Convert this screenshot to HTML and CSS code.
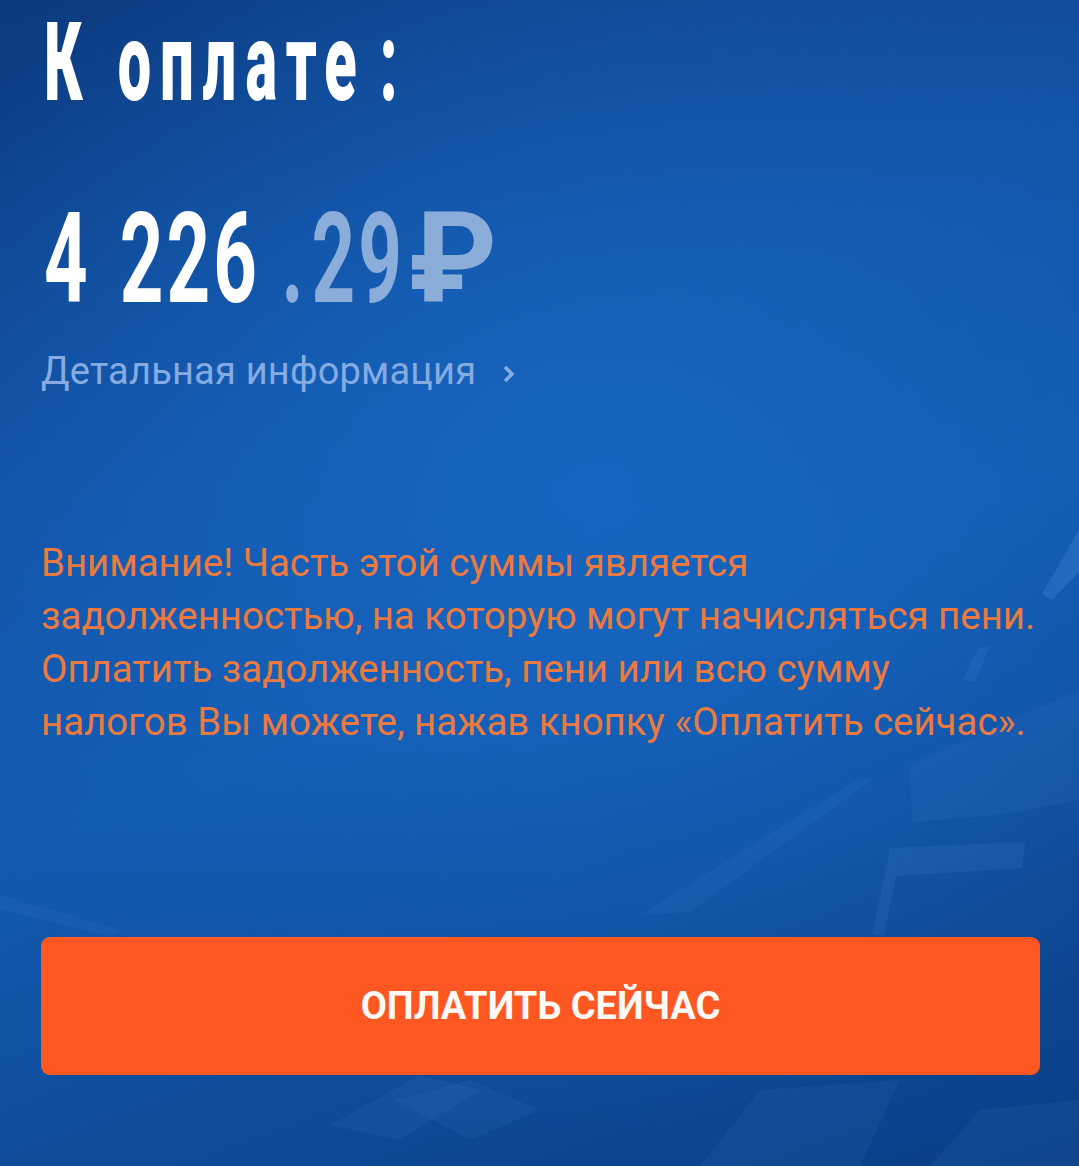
FILE: index.html
```html
<!DOCTYPE html>
<html lang="ru">
<head>
<meta charset="utf-8">
<title>К оплате</title>
<link rel="stylesheet" href="styles.css">
</head>
<body>
<main class="screen">
  <svg class="backdrop" viewBox="0 0 1079 1166" preserveAspectRatio="none" aria-hidden="true">
    <polygon class="glint glint-strong" points="1042,594 1079,530 1079,572 1052,600"/>
    <polygon class="glint" points="963,680 978,648 990,646 975,682"/>
    <polygon class="glint glint-soft" points="910,765 1079,690 1079,800 1000,815 912,822"/>
    <polygon class="glint glint-soft" points="640,915 860,778 872,780 690,912"/>
    <polygon class="glint" points="885,873 890,848 1025,842 1022,868 896,876 884,935 872,935"/>
    <polygon class="glint glint-soft" points="700,1166 760,1090 900,1080 860,1166"/>
    <polygon class="glint glint-soft" points="330,1125 420,1075 480,1090 400,1140"/>
    <polygon class="glint glint-soft" points="395,1100 470,1080 540,1110 470,1140"/>
    <polygon class="glint glint-soft" points="0,895 120,930 110,936 0,910"/>
    <polygon class="glint glint-soft" points="930,1166 980,1110 1079,1100 1079,1166"/>
  </svg>

  <section class="summary">
    <h1 class="title"><span class="narrow">К оплате<span class="colon">:</span></span></h1>
    <p class="amount"><span class="narrow"><span class="whole">4 226</span><span class="fraction"><span class="dot">.</span>29<span class="rub">₽</span></span></span></p>
    <a class="details" href="#">Детальная информация
      <svg class="chevron" viewBox="0 0 14 18" aria-hidden="true"><polyline points="3,2 10,9 3,16"/></svg>
    </a>
  </section>

  <p class="warning">Внимание! Часть этой суммы является<br>задолженностью, на которую могут начисляться пени.<br>Оплатить задолженность, пени или всю сумму<br>налогов Вы можете, нажав кнопку «Оплатить сейчас».</p>

  <button class="pay" type="button">ОПЛАТИТЬ СЕЙЧАС</button>
</main>
</body>
</html>
```

FILE: styles.css
```css
html, body {
  margin: 0;
  padding: 0;
}

body {
  font-family: Roboto, "Noto Sans", "Liberation Sans", sans-serif;
  background: #0e4188;
}

.screen {
  position: relative;
  min-height: 1166px;
  box-sizing: border-box;
  padding: 8px 39px 0 41px;
  overflow: hidden;
  background:
    radial-gradient(ellipse 70% 55% at 55% 42%, rgba(24, 104, 196, 0.85) 0%, rgba(24, 104, 196, 0) 100%),
    linear-gradient(160deg, #0c3a7e 0%, #1254a8 35%, #125ab0 55%, #0e4a96 80%, #0b3f86 100%);
  display: flex;
  flex-direction: column;
}

/* soft light streaks in the backdrop */
.backdrop {
  position: absolute;
  inset: 0;
  width: 100%;
  height: 100%;
  pointer-events: none;
}

.glint {
  fill: rgba(120, 180, 255, 0.09);
}

.glint-strong {
  fill: rgba(120, 180, 255, 0.16);
}

.glint-soft {
  fill: rgba(120, 180, 255, 0.06);
}

.summary,
.warning,
.pay {
  position: relative;
}

.summary {
  display: flex;
  flex-direction: column;
  align-items: flex-start;
}

/* condensed display lettering */
.narrow {
  display: inline-block;
  transform-origin: left center;
  white-space: nowrap;
}

.title {
  margin: 0 0 0 3px;
  font-size: 110px;
  line-height: 110px;
  font-weight: 900;
  color: #ffffff;
}

.title .narrow {
  transform: scaleX(0.54);
  letter-spacing: 17px;
  word-spacing: 4px;
}

.colon {
  margin-left: 26px;
}

.amount {
  margin: 77px 0 0 3px;
  font-size: 127px;
  line-height: 127px;
  font-weight: 700;
  color: #ffffff;
}

.amount .narrow {
  transform: scaleX(0.6);
  letter-spacing: 5px;
  word-spacing: 12px;
}

.fraction {
  color: #8badd9;
}

.dot {
  margin: 0 8px 0 36px;
}

.rub {
  display: inline-block;
  margin-left: 6px;
  transform: scaleX(1.64);
  transform-origin: left center;
}

.details {
  margin-top: 29px;
  display: flex;
  align-items: center;
  gap: 26px;
  font-size: 38px;
  line-height: 40px;
  letter-spacing: 0.2px;
  color: #86abe0;
  text-decoration: none;
}

.chevron {
  width: 14px;
  height: 18px;
  margin-top: 6px;
}

.chevron polyline {
  fill: none;
  stroke: #86abe0;
  stroke-width: 3.5;
}

.warning {
  margin: 145px 0 0 0;
  font-size: 38.4px;
  line-height: 53px;
  color: #ec7a3e;
  white-space: nowrap;
}

.pay {
  margin-top: 189px;
  height: 138px;
  width: 100%;
  border: none;
  border-radius: 9px;
  background: #ff5722;
  color: #fffaf5;
  font-family: Roboto, "Noto Sans", "Liberation Sans", sans-serif;
  font-size: 38px;
  font-weight: 700;
  cursor: pointer;
}
```
